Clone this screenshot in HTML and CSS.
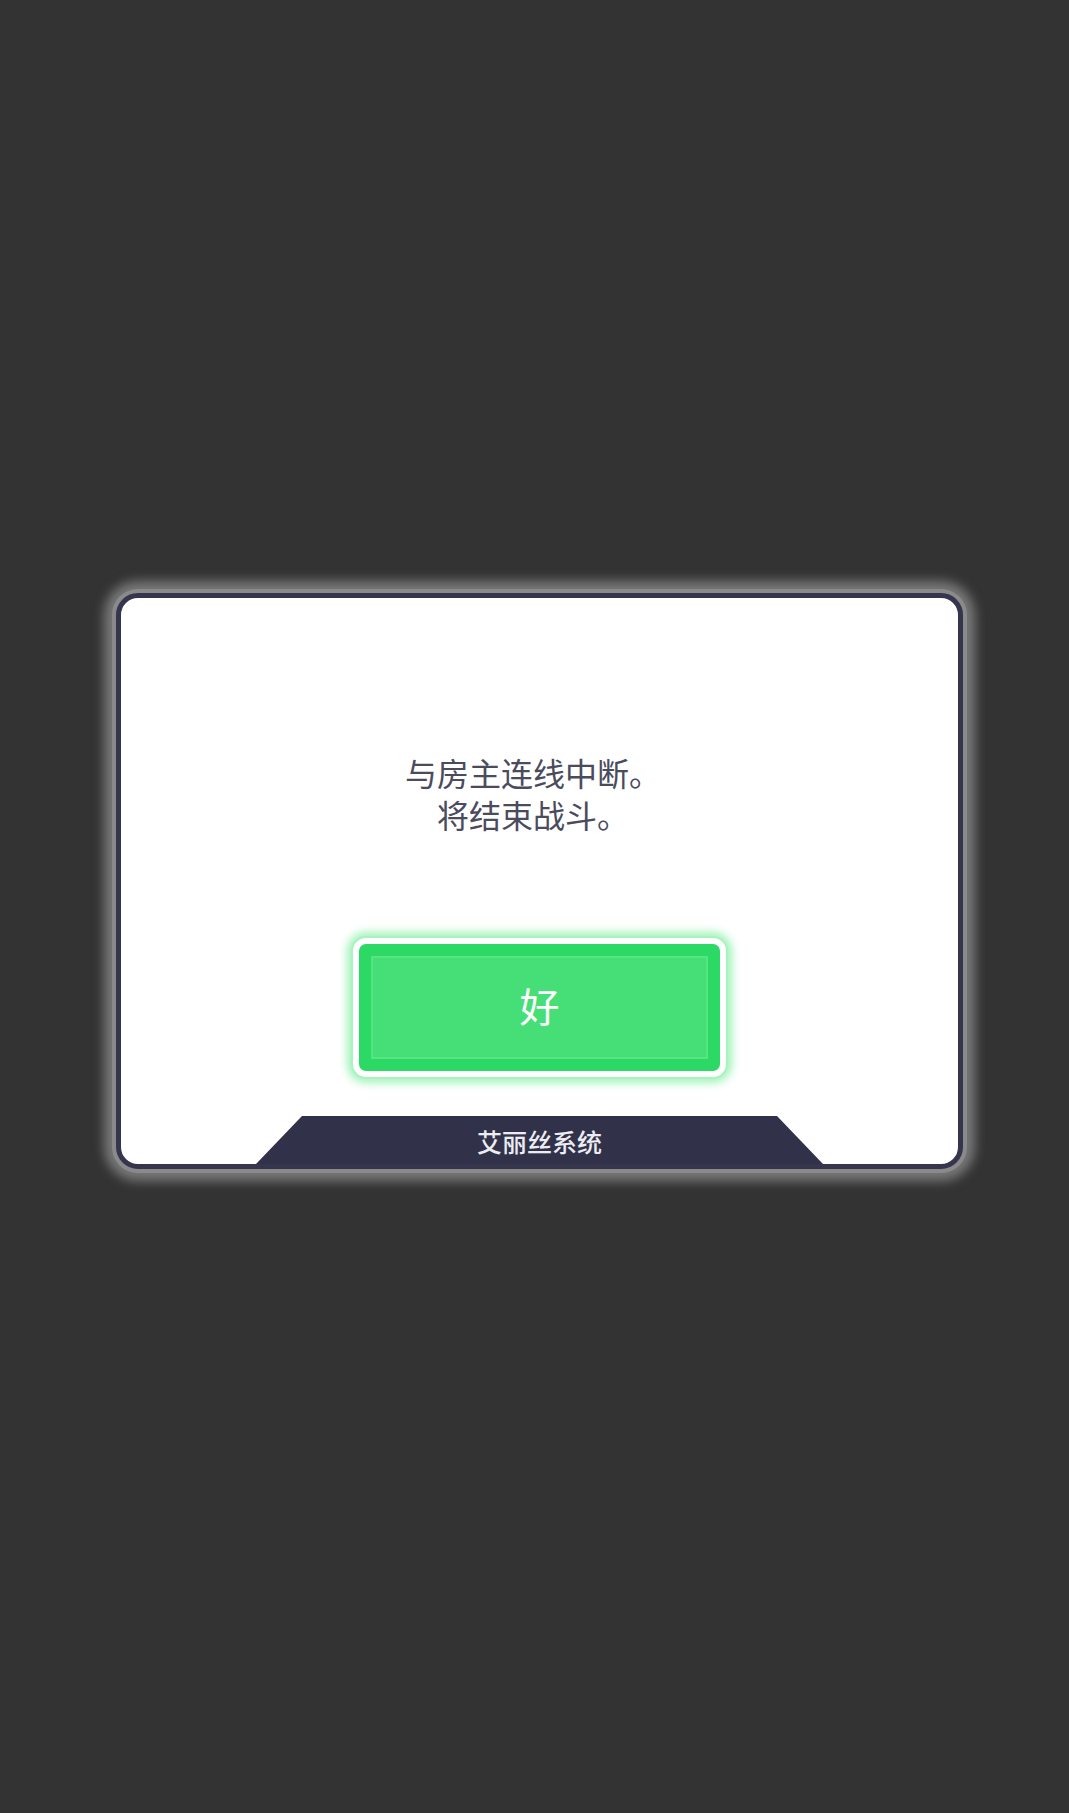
FILE: index.html
```html
<!DOCTYPE html>
<html lang="zh">
<head>
    <meta charset="UTF-8">
    <title>艾丽丝系统</title>
    <link rel="stylesheet" href="styles.css">
</head>
<body>
    <div class="dialog">
        <p class="message">与房主连线中断。<br>将结束战斗。</p>
        <div class="ok-button">
            <div class="ok-face">
                <div class="ok-inner">好</div>
            </div>
        </div>
        <div class="footer-tab">艾丽丝系统</div>
    </div>
</body>
</html>
```
FILE: styles.css
```css
/* 기본 페이지 */
html, body {
    margin: 0;
    background-color: #333333;
}
body {
    height: 1813px;
    padding-top: 593px;
    box-sizing: border-box;
    font-family: "Noto Sans CJK SC", "Noto Sans", sans-serif;
}
/* 대화 상자 */
.dialog {
    width: 847px;
    height: 576px;
    margin-left: 116px;
    box-sizing: border-box;
    border: 5px solid #35354d;
    border-radius: 22px;
    background-color: #ffffff;
    box-shadow: 0 0 0 4px #8a8a8a, 0 0 11px 12px rgba(128, 128, 128, 0.9);
    display: flex;
    flex-direction: column;
    align-items: center;
    padding-top: 153px;
    overflow: hidden;
}
.message {
    margin: 0;
    padding-right: 13px;
    font-size: 32px;
    line-height: 42px;
    color: #4b4b5e;
    text-align: center;
}
/* 확인 버튼 */
.ok-button {
    margin-top: 103px;
    width: 373px;
    height: 139px;
    box-sizing: border-box;
    padding: 6px;
    background-color: #ffffff;
    border-radius: 13px;
    box-shadow: 0 0 0 2px #a8f3bf, 0 0 9px 6px rgba(100, 235, 140, 0.6);
}
.ok-face {
    height: 100%;
    box-sizing: border-box;
    padding: 12px;
    background-color: #2bd964;
    border-radius: 7px;
}
.ok-inner {
    height: 100%;
    box-sizing: border-box;
    padding-bottom: 5px;
    border: 2px solid #55e683;
    background-color: #46df77;
    display: flex;
    align-items: center;
    justify-content: center;
    color: #ffffff;
    font-size: 40px;
}
/* 하단 탭 */
.footer-tab {
    margin-top: auto;
    width: 567px;
    height: 48px;
    background-color: #31324a;
    clip-path: polygon(46px 0, calc(100% - 46px) 0, 100% 100%, 0 100%);
    color: #ececf2;
    font-size: 25px;
    font-weight: 500;
    line-height: 50px;
    text-align: center;
}
```
